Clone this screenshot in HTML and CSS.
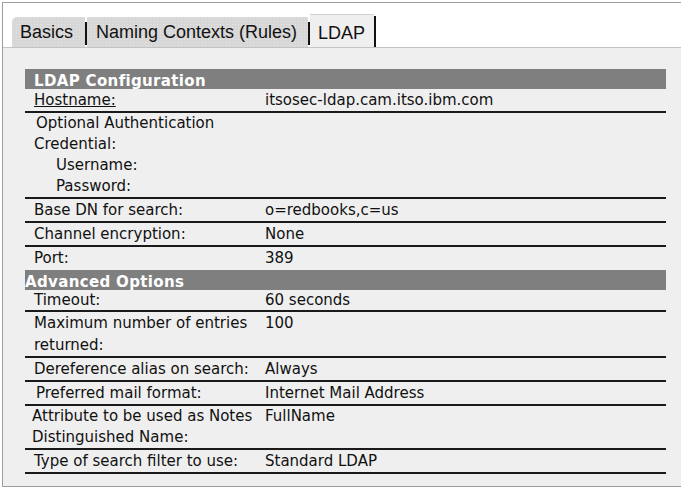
FILE: index.html
```html
<!DOCTYPE html>
<html lang="en">
<head>
    <meta charset="UTF-8">
    <meta name="viewport" content="width=device-width, initial-scale=1.0">
    <title>LDAP Settings</title>
    <link rel="stylesheet" href="styles.css">
</head>
<body>
    <div class="frame">
        <div class="tabs">
            <div class="tab">Basics</div>
            <span class="sep"></span>
            <div class="tab">Naming Contexts (Rules)</div>
            <span class="sep"></span>
            <div class="tab active">LDAP</div>
            <span class="sep tall"></span>
        </div>

        <div class="panel">
            <div class="bar">LDAP Configuration</div>
            <div class="row">
                <span class="label"><u>Hostname:</u></span>
                <span class="value">itsosec-ldap.cam.itso.ibm.com</span>
            </div>
            <div class="row cred">
                <span class="label">
                    <span class="line first">Optional Authentication</span>
                    <span class="line">Credential:</span>
                    <span class="line sub">Username:</span>
                    <span class="line sub">Password:</span>
                </span>
                <span class="value"></span>
            </div>
            <div class="row">
                <span class="label">Base DN for search:</span>
                <span class="value">o=redbooks,c=us</span>
            </div>
            <div class="row">
                <span class="label">Channel encryption:</span>
                <span class="value">None</span>
            </div>
            <div class="row last">
                <span class="label">Port:</span>
                <span class="value">389</span>
            </div>

            <div class="bar flush">Advanced Options</div>
            <div class="row short">
                <span class="label">Timeout:</span>
                <span class="value">60 seconds</span>
            </div>
            <div class="row">
                <span class="label">Maximum number of entries returned:</span>
                <span class="value">100</span>
            </div>
            <div class="row">
                <span class="label">Dereference alias on search:</span>
                <span class="value">Always</span>
            </div>
            <div class="row">
                <span class="label nudge">Preferred mail format:</span>
                <span class="value">Internet Mail Address</span>
            </div>
            <div class="row tight">
                <span class="label pull">Attribute to be used as Notes Distinguished Name:</span>
                <span class="value">FullName</span>
            </div>
            <div class="row">
                <span class="label">Type of search filter to use:</span>
                <span class="value">Standard LDAP</span>
            </div>
        </div>
    </div>
</body>
</html>
```

FILE: styles.css
```css
body {
    margin: 2px;
    background-color: #fff;
    font-family: "DejaVu Sans", sans-serif;
    color: #111;
}

.frame {
    width: 680px;
    height: 485px;
    box-sizing: border-box;
    border: 1px solid #9c9c9c;
    display: flex;
    flex-direction: column;
}

/* tab strip */
.tabs {
    height: 44px;
    border-bottom: 1px solid #c4c4c4;
    display: flex;
    align-items: flex-end;
    padding-left: 9px;
    font-family: "Liberation Sans", Arial, sans-serif;
    font-size: 18px;
}

.tab {
    height: 30px;
    box-sizing: border-box;
    padding: 5px 11px 5px 9px;
    line-height: 20px;
    background-color: #d7d7d7;
    background-image: radial-gradient(#e4e4e4 0.7px, transparent 0.9px);
    background-size: 3px 3px;
    white-space: nowrap;
}

.tab:first-child {
    padding-left: 8px;
    padding-right: 12px;
    border-top-left-radius: 5px;
}

.tab.active {
    height: 33px;
    padding: 8px 9px 5px 8px;
    background: #efefef;
    border-top: 1px solid #d0d0d0;
}

.sep {
    width: 2px;
    height: 23px;
    margin-bottom: 2px;
    background-color: #111;
}

.sep.tall {
    height: 31px;
    margin-bottom: 0;
}

/* settings panel */
.panel {
    flex: 1;
    background-color: #efefef;
    padding: 21px 15px 0 22px;
    font-size: 15px;
}

.bar {
    height: 20px;
    overflow: hidden;
    background-color: #7f7f7f;
    color: #fff;
    font-weight: bold;
    letter-spacing: 0.35px;
    line-height: 24px;
    padding-left: 9px;
}

.bar.flush {
    padding-left: 0;
}

.row {
    display: grid;
    grid-template-columns: 231px 1fr;
    padding-left: 9px;
    line-height: 22px;
    border-bottom: 2px solid #1a1a1a;
}

.row.cred,
.row.tight {
    line-height: 21px;
}

.row.short {
    line-height: 20px;
}

.row.last {
    border-bottom: none;
    height: 23px;
}

.line {
    display: block;
}

.line.first {
    padding-left: 2px;
}

.line.sub {
    padding-left: 22px;
}

.nudge {
    padding-left: 2px;
}

.pull {
    margin-left: -2px;
}

.label {
    padding-right: 6px;
}
```
